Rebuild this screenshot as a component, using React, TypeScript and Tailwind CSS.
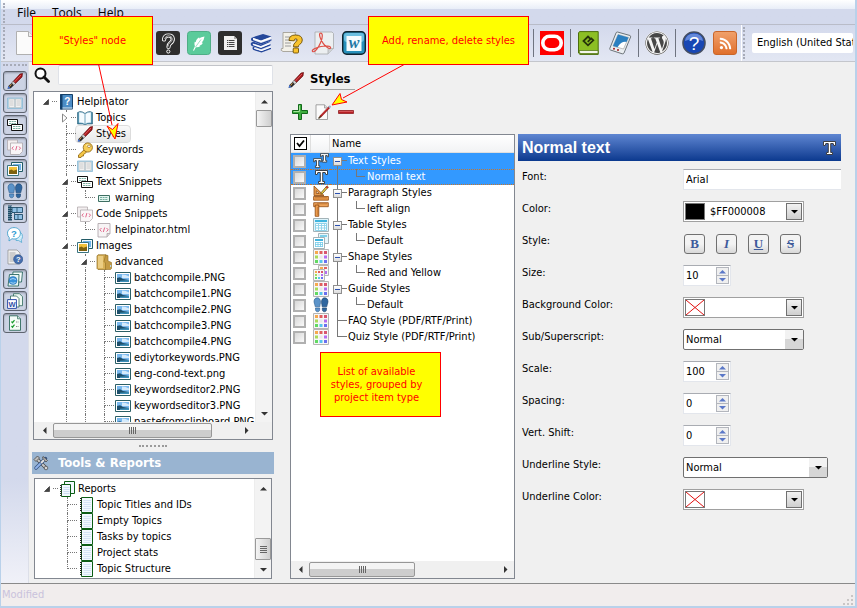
import type { ReactNode } from 'react';
import { FaRss, FaWordpress } from 'react-icons/fa';

/* ---------- icons ---------- */

function Svg({ size = 16, children }: { size?: number; children: ReactNode }) {
  return (
    <svg width={size} height={size} viewBox="0 0 16 16" className="block shrink-0" aria-hidden="true">
      {children}
    </svg>
  );
}

function Brush() {
  return (
    <Svg>
      <path d="M15.6 .4 13 1 6 8.6l2.2 2.2L15 4z" fill="#a3181a" stroke="#5a0a0b" strokeWidth=".6" />
      <path d="M14 2 7.4 9" stroke="#e0575a" strokeWidth="1" />
      <path d="M6.2 8.4 4.6 10l2.2 2.2 1.6-1.6z" fill="#d6d6d6" stroke="#555" strokeWidth=".5" />
      <path d="M4.6 10 1.4 13 .6 15.8l3.2-.6 3-3z" fill="#2b2b2b" />
      <path d="M1.6 13 .5 15.8l2.8-.6z" fill="#3f74e0" />
      <path d="M4.4 11.2 2.6 13.6" stroke="#d89a4a" strokeWidth="1" />
    </Svg>
  );
}

function HelpBook() {
  return (
    <Svg>
      <path d="M2.500 .5h12v14.500h-12z" fill="#4b8cc6" stroke="#143f68" />
      <path d="M2 .5h2.500v15H2z" fill="#14416d" />
      <path d="M4.500 14h10" stroke="#dbe9f5" />
      <text x="9.3" y="11" fontSize="10" fontWeight="700" fill="#fff" textAnchor="middle" fontFamily="Liberation Sans">?</text>
    </Svg>
  );
}

function OpenBook() {
  return (
    <Svg>
      <path d="M.5 2.500 3 1.500q3 0 5 2 2-2 5-2l2.500 1V14H10L8 15l-2-1H.5z" fill="#3b82a0" stroke="#2c5f79" strokeWidth=".6" />
      <path d="M2 2.300q4-.3 6 2V14q-2-1.500-6-1.300zM14 2.300q-4-.3-6 2V14q2-1.500 6-1.300z" fill="#f4fbff" stroke="#9fc4d8" strokeWidth=".5" />
      <path d="M8 4.300V14" stroke="#7da9bf" strokeWidth=".7" />
    </Svg>
  );
}

function Key() {
  return (
    <Svg>
      <path d="M8 7 1.500 13v2.500H4L5 14h1.500v-1.500l1-.5 2.500-2.500z" fill="#f3c544" stroke="#8a5f0c" strokeWidth=".8" />
      <circle cx="10.800" cy="5.500" r="4.600" fill="#f7cd55" stroke="#8a5f0c" strokeWidth=".8" />
      <path d="M9 3.500q2-1.800 4 .3" stroke="#fff2b8" strokeWidth="1" fill="none" />
      <ellipse cx="12" cy="4.300" rx="1.500" ry="1.200" fill="#fff" stroke="#8a5f0c" strokeWidth=".6" />
    </Svg>
  );
}

function Glossary() {
  return (
    <Svg>
      <path d="M.5 3h15v10.500H.5z" fill="#b4daee" stroke="#8cb9d3" strokeWidth=".8" />
      <path d="M2 4h5.600v8.500H2zM8.400 4H14v8.500H8.400z" fill="#f1f1f1" stroke="#b5b5b5" strokeWidth=".5" />
      <path d="M3 6h3.500M3 8h3.500M3 10h3.500M9.500 6H13M9.500 8H13M9.500 10H13" stroke="#c4c4c4" strokeWidth=".8" />
    </Svg>
  );
}

function TextSnippets() {
  return (
    <Svg>
      <path d="M.5 2.500h10v6H.5z" fill="#fff" stroke="#111" />
      <path d="M2 4.500h7M2 6.500h7" stroke="#5a9c8a" strokeDasharray="2 .6" strokeWidth=".8" />
      <path d="M4.500 7.500h11v6h-11z" fill="#fff" stroke="#111" />
      <path d="M6 9.500h8M6 11.500h8" stroke="#5a9c8a" strokeDasharray="2 .6" strokeWidth=".8" />
    </Svg>
  );
}

function Snippet() {
  return (
    <Svg>
      <path d="M2.500 5.500h11v6h-11z" fill="#e4f6f0" stroke="#3d6f62" />
      <path d="M4 7.500h8M4 9.500h8" stroke="#5a9c8a" strokeDasharray="2 .6" strokeWidth=".8" />
    </Svg>
  );
}

function CodeSheet() {
  return (
    <Svg>
      <path d="M2 1.500h12v10l-3 3.500H2z" fill="#f7f4f5" stroke="#a8a0a4" strokeWidth=".8" />
      <path d="M14 11.500h-3V15" fill="#d9d2d5" stroke="#a8a0a4" strokeWidth=".7" />
      <path d="M5.500 6 3.800 7.800l1.700 1.800M8.700 5.500 7.300 10M10.500 6l1.700 1.800-1.700 1.800" stroke="#e2688c" strokeWidth="1" fill="none" />
    </Svg>
  );
}

function CodeSnippets() {
  return (
    <Svg>
      <path d="M.5 1h10v10H.5z" fill="#f3eff0" stroke="#aaa2a5" strokeWidth=".7" />
      <path d="M3.500 4h12v8.500L12.500 15.500h-9z" fill="#f9f6f7" stroke="#a8a0a4" strokeWidth=".7" />
      <path d="M6.500 7.500 5 9.200l1.500 1.700M9.900 7 8.700 11.300M12 7.500l1.500 1.700-1.500 1.700" stroke="#e2688c" fill="none" />
    </Svg>
  );
}

function Images() {
  return (
    <Svg>
      <path d="M4.500 1.500h11v9h-11z" fill="#eef7fb" stroke="#225a66" />
      <path d="M6 3h8v6H6z" fill="#6fb3ea" />
      <path d="M.5 4.500h11v10H.5z" fill="#fff" stroke="#3a7480" />
      <path d="M2 6h8v5H2z" fill="#f2c13a" />
      <path d="M2 9.500l2.500-1 2 1.200 3.500-1.200V13H2z" fill="#7d6110" />
    </Svg>
  );
}

function Folder() {
  return (
    <Svg>
      <path d="M1 2 2 .8h8L11 2v12.500L10 15.500H2L1 14.500z" fill="#d7b057" stroke="#8f6d22" strokeWidth=".7" />
      <path d="M2 2h5v12H2z" fill="#ebcd83" />
      <path d="M8 7.500 9.500 9v6.500H14.500l1-1V8.500L12 7V1.500L9.500 1z" fill="#c39a44" stroke="#8f6d22" strokeWidth=".6" />
      <path d="M14.600 11v2" stroke="#b7ddf5" />
    </Svg>
  );
}

function Picture() {
  return (
    <Svg>
      <path d="M.5 2.500h15v11H.5z" fill="#fff" stroke="#2b5f66" />
      <path d="M2 4h12v8H2z" fill="#79b8ee" />
      <path d="M7 4.500q4 0 7 2V8H7z" fill="#d4eafb" />
      <path d="M2 8l3-.8 3 1.800 6 1V12H2z" fill="#1d4f6b" />
      <path d="M5 10.800 14 10V12H5z" fill="#3d8fb8" />
    </Svg>
  );
}

function Notebook() {
  return (
    <Svg>
      <path d="M3.500 .5h11v15h-11z" fill="#f2f8ff" stroke="#0b5d14" />
      <path d="M5.500 3.500h7.500M5.500 5.500h7.500M5.500 7.500h7.500M5.500 9.500h7.500M5.500 11.500h7.500M5.500 13.500h7.500" stroke="#cddff2" strokeWidth=".8" />
      <path d="M3 1v14" stroke="#222" strokeWidth="2" strokeDasharray="1 1" />
    </Svg>
  );
}

function Reports() {
  return (
    <Svg>
      <path d="M5.500 .5h10v12h-10z" fill="#f2f8ff" stroke="#0b5d14" />
      <path d="M2.500 3.500h9v12h-9z" fill="#f2f8ff" stroke="#0b5d14" />
      <path d="M2 4v11" stroke="#333" strokeWidth="2" strokeDasharray="1 1" />
      <path d="M4.500 6.500h6M4.500 8.500h6M4.500 10.500h6M4.500 12.500h6" stroke="#cddff2" />
    </Svg>
  );
}

function Steps() {
  return (
    <Svg>
      <path d="M4.300.8c2.200 0 3.300 2 3.200 4.500 0 2-.7 2.700-.7 4.500H2.300C2.200 8 1 6.800 1 4.800 1 2.400 2.200.8 4.300.8z" fill="#5b93c9" stroke="#2a5a8d" strokeWidth=".6" />
      <path d="M2.500 11h4.200v1.500c0 3-4.200 3-4.200 0z" fill="#5b93c9" stroke="#2a5a8d" strokeWidth=".6" />
      <path d="M11.700.8c-2.200 0-3.300 2-3.200 4.500 0 2 .7 2.700.7 4.500h4.500c.1-1.800 1.300-3 1.300-5 0-2.400-1.200-4-3.300-4z" fill="#2f669f" stroke="#153f6b" strokeWidth=".6" />
      <path d="M9.300 11h4.200v1.500c0 3-4.200 3-4.200 0z" fill="#2f669f" stroke="#153f6b" strokeWidth=".6" />
    </Svg>
  );
}

function Film() {
  return (
    <Svg>
      <path d="M1 .5h4v15H1z" fill="#1e4b66" />
      <path d="M2 1v14M4.300 1v14" stroke="#cfe4ef" strokeWidth=".8" strokeDasharray="1 1" />
      <path d="M5 2.500h10.500v5H5zM7.500 9.500h8v5h-8z" fill="#8fc0e4" stroke="#1e4b66" strokeWidth=".9" />
      <path d="M10 2v5.500M11 9.500v5M7.500 7.500v2" stroke="#1e4b66" strokeWidth=".8" />
    </Svg>
  );
}

function Chat() {
  return (
    <Svg>
      <path d="M9 4.500q6.500 0 6.500 5 0 2-1.300 3l.5 3-3-2H9z" fill="#d3effc" stroke="#56a9d0" strokeWidth=".8" />
      <path d="M7 .6c3.800 0 6.400 2.300 6.400 5.600S10.800 12 7 12q-1 0-2-.3L2 14l.3-3.300Q.5 9 .5 6.200C.5 3 3.200.6 7 .6z" fill="#fff" stroke="#45a0cc" strokeWidth=".9" />
      <text x="7" y="9.800" fontSize="9.500" fontWeight="700" fill="#2f9cd2" textAnchor="middle" fontFamily="Liberation Sans">?</text>
    </Svg>
  );
}

function DocHelp() {
  return (
    <Svg>
      <path d="M1 1h9l3 3v11H1z" fill="#f1f1f1" stroke="#8b8b8b" strokeWidth=".7" />
      <path d="M2.500 4h6M2.500 6h7M2.500 8h5M2.500 10h4M2.500 12h4" stroke="#999" strokeWidth=".8" />
      <circle cx="11.200" cy="10.300" r="4.600" fill="#466fae" stroke="#2c4e85" strokeWidth=".6" />
      <text x="11.200" y="13" fontSize="7.500" fontWeight="700" fill="#fff" textAnchor="middle" fontFamily="Liberation Sans">?</text>
    </Svg>
  );
}

function WebPages() {
  return (
    <Svg>
      <path d="M6 1h9.500l-1 10H5z" fill="#f4fbfa" stroke="#2d6a63" strokeWidth=".9" />
      <path d="M2.500 3.500h9.500l-.5 11.500H1z" fill="#e9f6f4" stroke="#2d6a63" strokeWidth=".9" />
      <circle cx="6" cy="9.500" r="4" fill="#3a93dc" stroke="#1d62a3" strokeWidth=".5" />
      <path d="M3 8.500q3-2 6 0M3.500 11.500q3 1.500 5 0" stroke="#c7e5fa" fill="none" strokeWidth=".8" />
    </Svg>
  );
}

function WordDocs() {
  return (
    <Svg>
      <path d="M6.500.7h6l3 3v9h-9z" fill="#eef8f2" stroke="#2f6a5c" strokeWidth=".8" />
      <path d="M3.500 3h6l2.500 2.500V14h-8.500z" fill="#fff" stroke="#2f6a5c" strokeWidth=".8" />
      <path d="M.6 6.600h8.800v8.800H.6z" fill="#fff" stroke="#2f4fa8" />
      <text x="5" y="13.700" fontSize="7.500" fontWeight="700" fill="#2f4fa8" textAnchor="middle" fontFamily="Liberation Sans">W</text>
    </Svg>
  );
}

function CheckSheet() {
  return (
    <Svg>
      <path d="M2.500.8h8l3 3v11.500h-11z" fill="#f6fdf8" stroke="#2f6a5c" strokeWidth=".9" />
      <path d="M10.500.8v3h3" fill="#cfe5da" stroke="#2f6a5c" strokeWidth=".7" />
      <path d="M4.500 6.500l1 1.200 2-2.500M4.500 11l1 1.200 2-2.500" stroke="#159a2b" strokeWidth="1.200" fill="none" />
      <path d="M9 7h2.500M9 11.500h2.500" stroke="#888" strokeDasharray="1 .6" />
    </Svg>
  );
}

function LetterT() {
  return (
    <Svg>
      <path d="M2.500 1.500h12v4h-1.700l-.6-2H9.700v9h1.800v2h-6v-2h1.800v-9H4.800l-.6 2H2.500z" fill="#fff" stroke="#333" strokeWidth=".9" />
    </Svg>
  );
}

function DoubleT() {
  return (
    <Svg>
      <path d="M7.500.6h8v3.200h-1.300V2.500h-1.600v5h1.100v1.600H9.300V7.500h1.100v-5H8.800v1.300H7.500z" fill="#fff" stroke="#333" strokeWidth=".8" />
      <path d="M.6 5.600h8v3.200H7.300V7.500H5.700v5.400h1.100v1.700H2.400v-1.700h1.100V7.500H1.900v1.300H.6z" fill="#fff" stroke="#333" strokeWidth=".8" />
    </Svg>
  );
}

function RulerPencil() {
  return (
    <Svg>
      <path d="M1 1v9.500h10zM3.300 5.800l3 2.700h-3z" fill="#e79a4b" stroke="#8f4a10" strokeWidth=".8" fillRule="evenodd" />
      <path d="M.6 11.500h14.800v3.700H.6z" fill="#ec9c4e" stroke="#8f4a10" strokeWidth=".8" />
      <path d="M3 12v1.500M5 12v1.500M7 12v1.500M9 12v1.500M11 12v1.500M13 12v1.500" stroke="#8f4a10" strokeWidth=".6" />
      <path d="M14 .8 15.400 2 9.500 8.600 7.800 9.300l.4-1.800z" fill="#f6d64a" stroke="#4b3b0a" strokeWidth=".7" />
      <path d="M13.200 1.500 14.800 3" stroke="#c22" strokeWidth="1.600" />
    </Svg>
  );
}

function RulerCorner() {
  return (
    <Svg>
      <path d="M.7 1.700h14.600v4H.7z" fill="#f0a55b" stroke="#8f4a10" strokeWidth=".8" />
      <path d="M2.200 4h3.600v11.300H2.200z" fill="#ec9c4e" stroke="#8f4a10" strokeWidth=".8" />
      <path d="M5 2v1.500M7 2v1.500M9 2v1.500M11 2v1.500M13 2v1.500M4 7h1.500M4 9h1.500M4 11h1.500M4 13h1.500" stroke="#8f4a10" strokeWidth=".6" />
    </Svg>
  );
}

function TableIcon() {
  return (
    <Svg>
      <path d="M.5 1.500h15v13H.5z" fill="#dff4fb" stroke="#a3b3b8" />
      <path d="M2 3h12v2H2z" fill="#3fb4de" />
      <path d="M2.500 6.500h11v7h-11z" fill="#fff" stroke="#8dd3ea" />
      <path d="M5.500 6v7M8.500 6v7M11.500 6v7M2 8.500h12M2 11h12" stroke="#8dd3ea" strokeWidth=".9" />
    </Svg>
  );
}

function TablesIcon() {
  return (
    <Svg>
      <path d="M5.500.5h10v10h-10z" fill="#e6f6fb" stroke="#a3b3b8" />
      <path d="M7 2h7v2H7z" fill="#7fd0ea" />
      <path d="M.5 4.500h11v11H.5z" fill="#fff" stroke="#a3b3b8" />
      <path d="M2 6h8v2H2z" fill="#3fb4de" />
      <path d="M2.500 9v5M5 9v5M7.500 9v5M9.500 9v5M2 9.500h8M2 11.500h8M2 13.500h8" stroke="#74cbe8" strokeWidth=".8" />
    </Svg>
  );
}

const SWATCHES = ['#f5a94f', '#e0605f', '#d9566f', '#a8dc5a', '#e9e9e9', '#b46cf0', '#62da62', '#58c6ee', '#6a70f0'];

function ShapeGrid() {
  return (
    <Svg>
      <path d="M.5.5h15v15H.5z" fill="#f7f7f7" stroke="#b5b5b5" />
      {SWATCHES.map((fill, i) => (
        <rect key={fill} x={2 + (i % 3) * 4.500} y={2 + Math.floor(i / 3) * 4.500} width="3" height="3" fill={fill} />
      ))}
    </Svg>
  );
}

function ShapeGrids() {
  return (
    <Svg>
      <path d="M5.500.5h10v10h-10z" fill="#f7f7f7" stroke="#b5b5b5" />
      <path d="M7 2h3v2H7z" fill="#f5a94f" />
      <path d="M11 2h3v2h-3z" fill="#e0605f" />
      <path d="M12 6h2v3h-2z" fill="#b46cf0" />
      <path d="M.5 4.500h11v11H.5z" fill="#f7f7f7" stroke="#b5b5b5" />
      {SWATCHES.map((fill, i) => (
        <rect key={fill} x={2 + (i % 3) * 3} y={6 + Math.floor(i / 3) * 3} width="2" height="2" fill={fill} />
      ))}
    </Svg>
  );
}

function Wrenches() {
  return (
    <Svg>
      <path d="M3 3l10 10" stroke="#474747" strokeWidth="3.400" />
      <path d="M3 3l10 10" stroke="#c9c9c9" strokeWidth="1.900" />
      <path d="M12.500 3.500 3 13" stroke="#35507d" strokeWidth="3.400" strokeLinecap="round" />
      <path d="M7 9 3 13" stroke="#8fb2ea" strokeWidth="2" strokeLinecap="round" />
      <path d="M12.500 3.500 8 8" stroke="#e2e2e2" strokeWidth="1.900" />
      <path d="M1 4.500 4.500 1 6.500 3 3 6.500zM10 1.500l4.500 4-1.500 1.500L9.500 3z" fill="#bdbdbd" stroke="#474747" strokeWidth=".8" />
      <circle cx="13" cy="13" r="1.800" fill="#d5d5d5" stroke="#474747" strokeWidth=".7" />
    </Svg>
  );
}

function PlusIcon() {
  return (
    <Svg>
      <path d="M6.500.5h3v6h6v3h-6v6h-3v-6h-6v-3h6z" fill="#3fae3f" stroke="#12691a" strokeWidth="1" />
      <path d="M7.500 1.500v6h-6" stroke="#a3e49a" fill="none" />
    </Svg>
  );
}

function EditIcon() {
  return (
    <Svg>
      <path d="M1 .8h8.500L12.500 4v11.500H1z" fill="#fbfbfb" stroke="#8d8d8d" strokeWidth=".8" />
      <path d="M9.500.8V4h3" fill="#ddd" stroke="#8d8d8d" strokeWidth=".7" />
      <path d="M14.500 3 5 13" stroke="#a3181a" strokeWidth="2" />
      <path d="M13.500 3.500 6 11.500" stroke="#e35a5a" strokeWidth=".7" />
      <path d="M5.800 12.200 3.500 14.500" stroke="#4a3a22" strokeWidth="1.300" />
      <path d="M15.500 2 14 3.500" stroke="#9db4d6" strokeWidth="2" />
    </Svg>
  );
}

function MinusIcon() {
  return (
    <Svg>
      <path d="M.5 6.500h15v3H.5z" fill="#b81f24" stroke="#8a1013" strokeWidth=".7" />
      <path d="M1 7.500h14" stroke="#e06a6e" strokeWidth=".7" />
    </Svg>
  );
}

function Magnifier() {
  return (
    <Svg>
      <circle cx="6.500" cy="6.500" r="5" fill="#fff" stroke="#111" strokeWidth="2" />
      <path d="M10 10l4.500 4.500" stroke="#111" strokeWidth="2.800" strokeLinecap="round" />
    </Svg>
  );
}

/* 24px toolbar drawings */

function Big({ children }: { children: ReactNode }) {
  return (
    <svg width="24" height="24" viewBox="0 0 24 24" className="block shrink-0" aria-hidden="true">
      {children}
    </svg>
  );
}

function NewPage() {
  return (
    <Big>
      <path d="M.5.5h12l5 5v18H.5z" fill="#fbfbfb" stroke="#b0b0b0" />
      <path d="M12.500 .5v5h5" fill="#eee" stroke="#b0b0b0" />
    </Big>
  );
}

function ChmTile() {
  return (
    <Big>
      <rect width="24" height="24" rx="3" fill="#2e2e2e" />
      <path d="M8 8.500q.5-4 4.500-4t4.300 3.500q0 2.500-2.500 4.200-1.800 1.300-1.800 3.800" fill="none" stroke="#fff" strokeWidth="4.200" strokeLinecap="round" />
      <path d="M8 8.500q.5-4 4.500-4t4.300 3.500q0 2.500-2.500 4.200-1.800 1.300-1.800 3.800" fill="none" stroke="#2e2e2e" strokeWidth="2.400" strokeLinecap="round" />
      <path d="M8.500 8q1-3.300 4-3.300 3.800.2 3.800 3.300 0 2-2.300 3.700-2 1.500-2 4" fill="none" stroke="#ddd" strokeWidth=".7" />
      <circle cx="12.300" cy="20.500" r="1.600" fill="#2e2e2e" stroke="#fff" strokeWidth="1" />
    </Big>
  );
}

function FeatherTile() {
  return (
    <Big>
      <rect x=".5" y=".5" width="23" height="23" rx="3" fill="#5bcb9b" stroke="#4fae86" />
      <path d="M17.500 5.500q-3.500.3-5.500 2l.3-1.300Q9 8 8.700 11.300l-1-.6q-.7 2.500.2 4.500L6 19.500l1 .3 1.800-3.600q2.700.3 4.700-1.200l-1.200-.3q2.500-.7 3.700-3l-1.300.1q2.300-2.300 2.800-6.300z" fill="#fff" />
      <path d="M8.500 16 14 8.500" stroke="#5bcb9b" strokeWidth=".6" />
    </Big>
  );
}

function DocTile() {
  return (
    <Big>
      <rect width="24" height="24" rx="3" fill="#2e2e2e" />
      <path d="M6 5h10l3 3v11H6z" fill="#f1f1f1" />
      <path d="M16 5v3h3" fill="#aaa" />
      <path d="M9 9.500h7.500M9 11.500h7.500M9 13.500h7.500M9 15.500h7.500" stroke="#444" />
      <path d="M10.500 9v7" stroke="#f1f1f1" strokeWidth=".6" />
    </Big>
  );
}

function Books() {
  return (
    <Big>
      <path d="M3 6.500 14 3l8.500 2.500L12 9.500z" fill="#24479a" />
      <path d="M3 6.500Q1 8 3 10l9 3.500 10.500-4V8.200L12 12 4 9V7z" fill="#24479a" />
      <path d="M4 8.300 12 11.300l10-3.800V6L12 9.700 4 7z" fill="#fff" />
      <path d="M3 11.300 2.500 11.500Q.8 13.200 2.800 15l9.200 3.200 9.500-3.700v-1.400L12 16.700 3.800 14v-1.600l8 2.600 9.700-4.300-.8-.5-9 3.200-7-2.600z" fill="#24479a" />
      <path d="M4 13 12 15.600l9-3.600v1L12 16.700 4 14z" fill="#fff" />
      <path d="M4.500 15.500Q2.500 17 4.500 19l8 2.500 9.500-3.600v-1.400L12.500 20l-7-2.200v-1.300z" fill="#24479a" />
      <path d="M5 16.900l7.500 2.200 9.500-3.500v1L12.500 20 5 17.700z" fill="#fff" />
    </Big>
  );
}

function DocQuestion() {
  return (
    <Big>
      <path d="M3 1.500h13q-2 1 0 3v16H3q-3-1-1.500-3H3z" fill="#f3f1e9" stroke="#9b978a" strokeWidth=".8" />
      <path d="M5 6h8M5 9h7M5 12h6M5 15h6" stroke="#9a9a9a" />
      <path d="M9 9.500q0-5.500 6.500-5.500t6.800 5q0 3-2.700 4.500-1.200.7-1.200 2.300h-5q0-3 2-4.500 1.700-1.200 1.700-2.200 0-1.300-1.300-1.300-1.600 0-1.600 2z" fill="#f8c22c" stroke="#6e4f06" strokeWidth=".9" />
      <rect x="13.200" y="17" width="5.300" height="5" rx="1" fill="#f8c22c" stroke="#6e4f06" strokeWidth=".9" />
    </Big>
  );
}

function PdfIcon() {
  return (
    <Big>
      <path d="M4 1h17l1.500 1.500v15L17 23H4z" fill="#eceff1" stroke="#a6a9ac" strokeWidth=".8" />
      <path d="M22.500 17.500H17V23" fill="#cfd3d6" stroke="#a6a9ac" strokeWidth=".7" />
      <path d="M9.200 2.300c2.800-1 2.700 4.200.3 9.500C7.500 16.500 4 22 1.500 20.500.2 19 5 16.500 10 15.500c5-.9 9.700-.7 9.600 1.200-.2 2.300-5-.5-7.600-4.500C9.500 8.500 7.500 3 9.200 2.300z" fill="none" stroke="#de4f46" strokeWidth="1.200" />
    </Big>
  );
}

function WordTile() {
  return (
    <Big>
      <rect x=".7" y=".7" width="22.600" height="22.600" rx="4" fill="#2790bb" stroke="#10242e" strokeWidth="1.400" />
      <rect x="2" y="2" width="20" height="9" rx="3" fill="#6cbfe0" />
      <rect x="4.500" y="5" width="15" height="15" fill="#f5fbfd" />
      <text x="12" y="17" fontSize="16" fontStyle="italic" fontWeight="700" fill="#2379a4" textAnchor="middle" fontFamily="Liberation Serif">w</text>
    </Big>
  );
}

function RedO() {
  return (
    <Big>
      <path d="M0 0h24v24H0z" fill="#f00" />
      <rect x="2.800" y="5.300" width="18.400" height="13.400" rx="6.700" fill="none" stroke="#fff" strokeWidth="3.600" />
    </Big>
  );
}

function Epub() {
  return (
    <Big>
      <path d="M2.500.6h18.700v22.800H3L1.500 22V2z" fill="#8cbf24" stroke="#4c6e0d" strokeWidth="1" />
      <path d="M2 19.500h19v3H3z" fill="#f3f5ea" stroke="#4c6e0d" strokeWidth=".7" />
      <path d="M13 7.500 11 5.500 6.500 10l4.500 4.300 5.300-5-2-1.900-3.600 3.400" fill="none" stroke="#26340a" strokeWidth="1.800" />
    </Big>
  );
}

function Ereader() {
  return (
    <Big>
      <path d="M9.500 1 22 4.500q1 .5.600 1.500L16 22q-.6 1.200-1.800.8L2.500 19q-1.200-.5-.7-1.600L8 2q.5-1.200 1.500-1z" fill="#e9edf0" stroke="#6d7479" strokeWidth="1" />
      <path d="M10 3.500 20.500 6.500 15.500 18 5 15z" fill="#fff" stroke="#888" strokeWidth=".5" />
      <path d="M10 3.500 20.500 6.500 18.500 11q-5-1-9 5.200L5 15z" fill="#2b7fc0" />
      <circle cx="6" cy="17.800" r="1" fill="#a32020" />
      <circle cx="10" cy="19" r="1" fill="#a32020" />
    </Big>
  );
}

function WordPressIcon() {
  return (
    <span className="flex size-6 items-center justify-center rounded-full bg-[#f4f4f4] text-[#464646]">
      <FaWordpress size={24} />
    </span>
  );
}

function HelpRound() {
  return (
    <Big>
      <circle cx="12" cy="12" r="11" fill="#1746b4" stroke="#454f63" strokeWidth="1.600" />
      <path d="M3 10q1-7.500 9-7.500t9 7.500q-9-4-18 0z" fill="#6488da" />
      <text x="12" y="18.500" fontSize="19" fill="#fff" textAnchor="middle" fontFamily="Liberation Sans">?</text>
    </Big>
  );
}

function RssTile() {
  return (
    <span className="flex size-6 items-center justify-center rounded-[3px] border border-[#c9662a] bg-linear-to-b from-[#f0a06a] to-[#e0702c] text-white">
      <FaRss size={13} />
    </span>
  );
}

/* ---------- small parts ---------- */

function ToolButton({ label, children }: { label: string; children: ReactNode }) {
  return (
    <button type="button" aria-label={label} className="block size-6 shrink-0">
      {children}
    </button>
  );
}

function Sep() {
  return <span className="mx-[6px] h-7 w-px shrink-0 bg-[#6f7480]" />;
}

function Grip({ tall }: { tall?: boolean }) {
  return <span className={`w-0 shrink-0 border-l-2 border-dotted border-[#a7abb8] ${tall ? 'h-8' : 'h-5'}`} />;
}

const ARROWS = {
  up: 'M0 4.500 3.500 1 7 4.500z',
  down: 'M0 1 3.500 4.500 7 1z',
  left: 'M5.500 0 2 3.500 5.500 7z',
  right: 'M2 0 5.500 3.500 2 7z',
};

function Arrow({ dir, color = '#333' }: { dir: keyof typeof ARROWS; color?: string }) {
  const tall = dir === 'left' || dir === 'right';
  return (
    <svg width="7" height={tall ? 7 : 5} className="block shrink-0" aria-hidden="true">
      <path d={ARROWS[dir]} fill={color} />
    </svg>
  );
}

function VScroll({ atEnd }: { atEnd?: boolean }) {
  return (
    <div className="flex w-[17px] shrink-0 flex-col border-l border-[#ededed] bg-[#f3f3f3]">
      <button type="button" aria-label="Scroll up" className="flex h-[18px] items-center justify-center"><Arrow dir="up" /></button>
      {atEnd && <span className="flex-1" />}
      <div className={`flex flex-col items-center justify-center gap-px rounded-[1px] border border-[#999] bg-linear-to-r from-[#f4f4f4] to-[#cfcfcf] ${atEnd ? 'h-[22px]' : 'h-[17px]'}`}>
        {atEnd && [0, 1, 2, 3].map((i) => <span key={i} className="h-px w-[7px] bg-[#666]" />)}
      </div>
      {!atEnd && <span className="flex-1" />}
      <button type="button" aria-label="Scroll down" className="flex h-[18px] items-center justify-center"><Arrow dir="down" /></button>
    </div>
  );
}

function HScroll({ thumb }: { thumb: string }) {
  return (
    <div className="flex h-[17px] shrink-0 bg-[#f0f0f0]">
      <button type="button" aria-label="Scroll left" className="flex w-[18px] items-center justify-center"><Arrow dir="left" /></button>
      <div className={`my-px flex items-center justify-center gap-px rounded-[2px] border border-[#979797] bg-linear-to-b from-[#f4f4f4] from-50% to-[#cdcdcd] to-50% ${thumb}`}>
        {[0, 1, 2, 3].map((i) => <span key={i} className="h-[7px] w-px bg-[#666]" />)}
      </div>
      <span className="flex-1" />
      <button type="button" aria-label="Scroll right" className="flex w-[18px] items-center justify-center"><Arrow dir="right" /></button>
    </div>
  );
}

function Callout({ className, children }: { className: string; children: ReactNode }) {
  return (
    <div className={`absolute flex items-center justify-center border border-[#f00] bg-[#ff0] text-center leading-[13px] text-[#f00] ${className}`}>
      {children}
    </div>
  );
}

/* ---------- tree ---------- */

// Guide codes, one per indent level: " " blank, "|" through line, "t" tee,
// "l" last child, "o" opened tee, "c" collapsed tee, "r" opened root.
type Node = { guides: string; icon: () => ReactNode; text: string; selected?: boolean };

function Guide({ code }: { code: string }) {
  const up = 'tlo|c'.includes(code);
  const down = 'to|c'.includes(code);
  const across = 'tlocr'.includes(code);
  const dot = 'border-dotted border-[#777]';
  return (
    <span className="relative grid h-4 w-[19px] shrink-0 grid-cols-[9px_1fr] grid-rows-2">
      <span />
      <span className={`${dot} ${up ? 'border-l' : ''} ${across ? 'border-b' : ''}`} />
      <span />
      <span className={`${dot} ${down ? 'border-l' : ''}`} />
      {'ocr'.includes(code) && (
        <span className="absolute inset-y-0 left-0 flex w-4 items-center justify-center">
          <svg width="10" height="10" className="block bg-white" aria-hidden="true">
            {code === 'c'
              ? <path d="M2.500 1v8l4.500-4z" fill="#fff" stroke="#8a8a8a" />
              : <path d="M7.500 2.500v5h-5z" fill="#444" stroke="#222" strokeWidth=".6" />}
          </svg>
        </span>
      )}
    </span>
  );
}

function Tree({ nodes, label }: { nodes: Node[]; label: string }) {
  return (
    <ul aria-label={label} className="min-h-0 min-w-0 flex-1 overflow-hidden pt-[2px] pl-1">
      {nodes.map(({ guides, icon: Icon, text, selected }) => (
        <li key={text} className="flex h-4 items-center whitespace-nowrap">
          {guides.split('').map((code, i) => <Guide key={i} code={code} />)}
          <span className={`flex h-4 items-center gap-[3px] pr-1 pl-px ${selected ? 'rounded-[3px] bg-linear-to-b from-[#fafafa] to-[#e8e8e8] outline outline-[#dcdcdc]' : ''}`}>
            <Icon />
            {text}
          </span>
        </li>
      ))}
    </ul>
  );
}

const PROJECT: Node[] = [
  { guides: 'r', icon: HelpBook, text: 'Helpinator' },
  { guides: ' c', icon: OpenBook, text: 'Topics' },
  { guides: ' t', icon: Brush, text: 'Styles', selected: true },
  { guides: ' t', icon: Key, text: 'Keywords' },
  { guides: ' t', icon: Glossary, text: 'Glossary' },
  { guides: ' o', icon: TextSnippets, text: 'Text Snippets' },
  { guides: ' |l', icon: Snippet, text: 'warning' },
  { guides: ' o', icon: CodeSnippets, text: 'Code Snippets' },
  { guides: ' |l', icon: CodeSheet, text: 'helpinator.html' },
  { guides: ' o', icon: Images, text: 'Images' },
  { guides: ' |o', icon: Folder, text: 'advanced' },
  ...['batchcompile.PNG', 'batchcompile1.PNG', 'batchcompile2.PNG', 'batchcompile3.PNG', 'batchcompile4.PNG', 'ediytorkeywords.PNG', 'eng-cond-text.png', 'keywordseditor2.PNG', 'keywordseditor3.PNG', 'pastefromclipboard.PNG'].map(
    (text) => ({ guides: ' ||t', icon: Picture, text }),
  ),
];

const REPORTS: Node[] = [
  { guides: 'r', icon: Reports, text: 'Reports' },
  { guides: ' t', icon: Notebook, text: 'Topic Titles and IDs' },
  { guides: ' t', icon: Notebook, text: 'Empty Topics' },
  { guides: ' t', icon: Notebook, text: 'Tasks by topics' },
  { guides: ' t', icon: Notebook, text: 'Project stats' },
  { guides: ' l', icon: Notebook, text: 'Topic Structure' },
];

/* ---------- styles list ---------- */

type StyleRow = { icon: () => ReactNode; text: string; kind: 'group' | 'child' | 'leaf'; first?: boolean; last?: boolean; selected?: boolean; focused?: boolean };

const STYLES: StyleRow[] = [
  { icon: DoubleT, text: 'Text Styles', kind: 'group', first: true, selected: true },
  { icon: LetterT, text: 'Normal text', kind: 'child', selected: true, focused: true },
  { icon: RulerPencil, text: 'Paragraph Styles', kind: 'group' },
  { icon: RulerCorner, text: 'left align', kind: 'child' },
  { icon: TableIcon, text: 'Table Styles', kind: 'group' },
  { icon: TablesIcon, text: 'Default', kind: 'child' },
  { icon: ShapeGrid, text: 'Shape Styles', kind: 'group' },
  { icon: ShapeGrids, text: 'Red and Yellow', kind: 'child' },
  { icon: ShapeGrid, text: 'Guide Styles', kind: 'group' },
  { icon: Steps, text: 'Default', kind: 'child' },
  { icon: ShapeGrid, text: 'FAQ Style (PDF/RTF/Print)', kind: 'leaf' },
  { icon: ShapeGrid, text: 'Quiz Style (PDF/RTF/Print)', kind: 'leaf', last: true },
];

function Branch({ row }: { row: StyleRow }) {
  const line = 'border-[#777]';
  return (
    <>
      <span className="relative grid h-4 w-[18px] shrink-0 grid-cols-[7px_1fr] grid-rows-2">
        <span />
        <span className={`${line} ${row.first ? '' : 'border-l'} ${row.kind === 'child' ? '' : 'mr-px border-b'}`} />
        <span />
        <span className={`${line} ${row.last ? '' : 'border-l'}`} />
        {row.kind === 'group' && (
          <span className="absolute inset-y-0 left-[3px] flex items-center">
            <span className="flex size-[9px] items-center justify-center border border-[#8f8f8f] bg-linear-to-b from-white to-[#dcdcdc]">
              <span className="h-px w-[5px] bg-[#2b50b0]" />
            </span>
          </span>
        )}
      </span>
      {row.kind === 'child' && (
        <span className="grid h-4 w-[19px] shrink-0 grid-cols-[8px_9px] grid-rows-2">
          <span />
          <span className={`${line} border-b border-l`} />
        </span>
      )}
    </>
  );
}

function StylesTable() {
  return (
    <table className="w-full table-fixed border-separate border-spacing-0">
      <colgroup>
        <col className="w-5" />
        <col className="w-[19px]" />
        <col />
      </colgroup>
      <thead>
        <tr className="h-[18px] bg-linear-to-b from-white to-[#f1f2f4] text-left">
          <th className="border-r border-b border-[#dfdfdf] p-0 pl-[3px] font-normal">
            <span className="relative block size-[13px]">
              <input type="checkbox" defaultChecked aria-label="Select all styles" className="block size-[13px] appearance-none border border-black bg-white" />
              <svg width="13" height="13" className="pointer-events-none absolute inset-0" aria-hidden="true">
                <path d="M3 6l2.500 3L10 3.500" fill="none" stroke="#000" strokeWidth="1.800" />
              </svg>
            </span>
          </th>
          <th className="border-r border-b border-[#dfdfdf] p-0" aria-label="Icon" />
          <th className="border-b border-[#dfdfdf] p-0 pl-[2px] font-normal">Name</th>
        </tr>
      </thead>
      <tbody>
        {STYLES.map((row, i) => {
          const Icon = row.icon;
          const edge = row.focused ? 'border-y border-dotted border-[#c8752a]' : '';
          return (
            <tr key={i} className={`h-4 ${row.selected ? 'bg-[#39f] text-white' : ''}`}>
              <td className={`h-4 p-0 pl-[2px] ${edge}`}>
                <input type="checkbox" aria-label={`Select ${row.text}`} className="block size-[13px] appearance-none border-2 border-[#b0b0b0] bg-linear-to-br from-[#d8d8d8] to-[#fafafa]" />
              </td>
              <td className={`h-4 p-0 pl-[2px] ${edge}`}><div className="-my-px"><Icon /></div></td>
              <td className={`h-4 p-0 ${edge}`}>
                <span className="-my-px flex h-4 items-center whitespace-nowrap">
                  <Branch row={row} />
                  {row.text}
                </span>
              </td>
            </tr>
          );
        })}
      </tbody>
    </table>
  );
}

/* ---------- property form ---------- */

function Field({ label, id, children }: { label: string; id: string; children: ReactNode }) {
  return (
    <div className="flex h-8 items-start">
      <label htmlFor={id} className="w-[165px] shrink-0 pt-1 pl-1 leading-4">{label}</label>
      <div className="flex min-w-0 flex-1 pt-1">{children}</div>
    </div>
  );
}

function Spin({ id, value }: { id: string; value: string }) {
  return (
    <div className="flex h-[21px] w-12 items-center border border-[#e3e6ec] border-t-[#a9acb2] bg-white">
      <input id={id} defaultValue={value} className="w-8 min-w-0 pl-[2px] outline-none" />
      <span className="flex w-[13px] flex-col gap-px border border-[#b3b6bd] bg-[#b3b6bd]">
        <button type="button" aria-label="Increase" className="flex h-[7px] items-center justify-center bg-[#f0f0f0]"><Arrow dir="up" color="#5b78c8" /></button>
        <button type="button" aria-label="Decrease" className="flex h-[7px] items-center justify-center bg-[#f0f0f0]"><Arrow dir="down" color="#5b78c8" /></button>
      </span>
    </div>
  );
}

function ColorSelect({ id, value }: { id: string; value?: string }) {
  return (
    <div className="relative h-[21px] w-[121px] border border-[#a0a0a0] bg-white">
      <select id={id} className="block h-full w-full appearance-none pl-[26px] outline-none">
        <option>{value ?? ''}</option>
      </select>
      <span className={`pointer-events-none absolute inset-y-px left-px w-5 border border-[#777] ${value ? 'bg-black' : 'bg-white'}`}>
        {!value && (
          <svg viewBox="0 0 18 15" preserveAspectRatio="none" className="block size-full" aria-hidden="true">
            <path d="M0 0l18 15M18 0L0 15" stroke="#e01010" />
          </svg>
        )}
      </span>
      <span className="pointer-events-none absolute inset-y-px right-px flex w-4 items-center justify-center border border-[#707070] bg-linear-to-b from-[#f2f2f2] to-[#cfcfcf]">
        <Arrow dir="down" color="#000" />
      </span>
    </div>
  );
}

function PlainSelect({ id, width }: { id: string; width: string }) {
  return (
    <div className={`relative h-[21px] rounded-[2px] border border-[#707070] bg-white ${width}`}>
      <select id={id} className="block h-full w-full appearance-none pl-[2px] outline-none">
        <option>Normal</option>
      </select>
      <span className="pointer-events-none absolute inset-y-0 right-0 flex w-[18px] items-center justify-center bg-linear-to-b from-[#f2f2f2] from-50% to-[#d6d6d6] to-50%">
        <Arrow dir="down" color="#000" />
      </span>
    </div>
  );
}

const FORMAT = [
  { mark: 'B', name: 'Bold', look: '' },
  { mark: 'I', name: 'Italic', look: 'italic' },
  { mark: 'U', name: 'Underline', look: 'underline' },
  { mark: 'S', name: 'Strikethrough', look: 'line-through' },
];

/* ---------- page ---------- */

const RAIL: { icon: () => ReactNode; label: string; flat?: boolean }[] = [
  { icon: Brush, label: 'Styles' },
  { icon: Glossary, label: 'Glossary' },
  { icon: TextSnippets, label: 'Text snippets' },
  { icon: CodeSnippets, label: 'Code snippets' },
  { icon: Images, label: 'Images' },
  { icon: Steps, label: 'Guides' },
  { icon: Film, label: 'Video' },
  { icon: Chat, label: 'FAQ', flat: true },
  { icon: DocHelp, label: 'Quizzes', flat: true },
  { icon: WebPages, label: 'Web templates' },
  { icon: WordDocs, label: 'Word templates' },
  { icon: CheckSheet, label: 'Checklists' },
];

export default function App() {
  return (
    <div className="relative flex h-screen min-h-[600px] flex-col overflow-hidden border-r-2 border-b-2 border-l border-[#b9d1ea] bg-[#f0f0f0] font-['DejaVu_Sans_Condensed','DejaVu_Sans',sans-serif] text-[11px] leading-4 text-black">
      <nav className="flex h-6 shrink-0 items-center gap-4 bg-linear-to-b from-white from-0% via-[#e9eef8] via-37% to-[#d3d9ec] to-38% pt-px pl-[2px] font-['Open_Sans',sans-serif] text-xs">
        <span className="-mr-1 flex"><Grip /></span>
        <button type="button">File</button>
        <button type="button">Tools</button>
        <button type="button">Help</button>
      </nav>

      <div className="flex h-[38px] shrink-0 items-center border-y border-t-[#b9bcc8] border-b-[#c4c6cc] bg-linear-to-b from-[#d3d9ec] to-[#e3e7f3] pr-[2px] pl-[2px]">
        <Grip tall />
        <span className="ml-[11px]"><ToolButton label="New"><NewPage /></ToolButton></span>
        <span className="ml-[116px] flex gap-[7px]">
          <ToolButton label="Compile CHM"><ChmTile /></ToolButton>
          <ToolButton label="Web help"><FeatherTile /></ToolButton>
          <ToolButton label="HTML page"><DocTile /></ToolButton>
          <ToolButton label="Library"><Books /></ToolButton>
          <ToolButton label="Help file"><DocQuestion /></ToolButton>
          <ToolButton label="PDF"><PdfIcon /></ToolButton>
          <ToolButton label="Word"><WordTile /></ToolButton>
        </span>
        <span className="ml-[161px] flex items-center">
          <Sep />
          <ToolButton label="Oracle help"><RedO /></ToolButton>
          <Sep />
          <span className="flex gap-[7px]">
            <ToolButton label="ePub"><Epub /></ToolButton>
            <ToolButton label="Kindle"><Ereader /></ToolButton>
          </span>
          <Sep />
          <ToolButton label="WordPress"><WordPressIcon /></ToolButton>
          <Sep />
          <span className="flex gap-[7px]">
            <ToolButton label="Help"><HelpRound /></ToolButton>
            <ToolButton label="News"><RssTile /></ToolButton>
          </span>
        </span>
        <span className="ml-1 flex h-full min-w-0 flex-1 items-center gap-[7px] border-l border-white pl-px">
          <Grip tall />
          <select aria-label="Language" className="h-5 min-w-0 flex-1 appearance-none rounded-[2px] bg-white pl-[5px] outline-none">
            <option>English (United States)</option>
          </select>
        </span>
      </div>

      <div className="flex min-h-0 flex-1">
        <aside className="flex w-7 shrink-0 flex-col items-center border-r border-[#dcdfe8] bg-linear-to-b from-[#d3d9ec] from-80% to-[#f0f1f8]">
          <span className="mt-[2px] mb-[5px] w-6 border-t-2 border-dotted border-[#a7abb8]" />
          <div className="flex flex-col gap-[2px]">
            {RAIL.map(({ icon: Icon, label, flat }) => (
              <button
                key={label}
                type="button"
                aria-label={label}
                className={`flex h-5 w-6 items-center justify-center rounded-[3px] ${flat ? '' : 'border border-[#5f6570] bg-[#ccd3e4] inset-shadow-[0_1px_2px_#8d93a3]'}`}
              >
                <Icon />
              </button>
            ))}
          </div>
        </aside>

        <section className="ml-1 flex w-60 shrink-0 flex-col pt-[3px] pb-1">
          <div className="flex h-5 items-center gap-2 pl-px">
            <Magnifier />
            <input aria-label="Search" className="h-5 min-w-0 flex-1 rounded-[2px] border border-[#dfe2e8] border-t-[#c2c4c9] bg-white px-1 outline-none" />
          </div>
          <div className="mt-[6px] flex min-h-0 flex-1 flex-col border border-[#828790] bg-white">
            <div className="flex min-h-0 flex-1">
              <Tree nodes={PROJECT} label="Project" />
              <VScroll />
            </div>
            <div className="flex bg-[#f0f0f0] pr-[17px] pl-px">
              <div className="flex-1"><HScroll thumb="w-[159px]" /></div>
            </div>
          </div>
          <div className="flex h-3 shrink-0 items-center justify-center"><span className="w-7 border-t-2 border-dotted border-[#9a9a9a]" /></div>
          <h2 className="-mx-px flex h-[22px] shrink-0 items-center gap-[9px] bg-[#99b4d1] pl-px text-[13px] font-bold text-white">
            <Wrenches />
            Tools &amp; Reports
          </h2>
          <div className="mx-px mt-1 flex h-[101px] shrink-0 border border-[#828790] bg-white">
            <Tree nodes={REPORTS} label="Reports" />
            <VScroll atEnd />
          </div>
        </section>

        <section className="ml-4 flex w-[226px] shrink-0 flex-col pb-1 pl-px">
          <header className="flex shrink-0 items-center gap-[6px] pt-[7px]">
            <span className="-ml-[2px]"><Brush /></span>
            <h1 className="h-[21px] border-b border-[#a3a3a3] pr-1 text-[13px] leading-5 font-bold">Styles</h1>
          </header>
          <div className="flex h-11 shrink-0 items-center gap-[7px] pl-[2px]">
            <button type="button" aria-label="Add style"><PlusIcon /></button>
            <button type="button" aria-label="Rename style"><EditIcon /></button>
            <button type="button" aria-label="Delete style"><MinusIcon /></button>
          </div>
          <div className="relative flex min-h-0 flex-1 flex-col border border-[#828790] bg-white">
            <div className="min-h-0 flex-1 overflow-hidden"><StylesTable /></div>
            <HScroll thumb="w-[106px]" />
            <Callout className="top-[217px] left-[29px] h-[65px] w-[121px] pr-3 pl-1">List of available styles, grouped by project item type</Callout>
          </div>
        </section>

        <section className="mr-[14px] ml-[3px] min-w-0 flex-1 pt-[72px]">
          <h2 className="mb-1 flex h-[27px] items-center justify-between bg-linear-to-b from-[#5f86d2] to-[#0a398e] pr-1 pl-1 font-['Liberation_Sans',sans-serif] text-base font-bold text-white">
            Normal text
            <LetterT />
          </h2>
          <form>
            <Field label="Font:" id="font">
              <input id="font" defaultValue="Arial" className="h-[21px] min-w-0 flex-1 border-y border-l border-[#e3e6ec] border-t-[#a9acb2] bg-white pl-[2px] outline-none" />
            </Field>
            <Field label="Color:" id="color"><ColorSelect id="color" value="$FF000008" /></Field>
            <Field label="Style:" id="bold">
              <div className="flex gap-[11px] pt-px pl-px">
                {FORMAT.map(({ mark, name, look }) => (
                  <button
                    key={mark}
                    id={name.toLowerCase()}
                    type="button"
                    aria-label={name}
                    className={`flex h-5 w-[21px] items-center justify-center rounded-[3px] border border-[#707070] bg-linear-to-b from-[#f3f3f3] from-50% to-[#d8d8d8] font-['Liberation_Serif',serif] text-[13px] font-bold text-[#3e5b9b] ${look}`}
                  >
                    {mark}
                  </button>
                ))}
              </div>
            </Field>
            <Field label="Size:" id="size"><Spin id="size" value="10" /></Field>
            <Field label="Background Color:" id="background"><ColorSelect id="background" /></Field>
            <Field label="Sub/Superscript:" id="script"><PlainSelect id="script" width="w-[121px]" /></Field>
            <Field label="Scale:" id="scale"><Spin id="scale" value="100" /></Field>
            <Field label="Spacing:" id="spacing"><Spin id="spacing" value="0" /></Field>
            <Field label="Vert. Shift:" id="shift"><Spin id="shift" value="0" /></Field>
            <Field label="Underline Style:" id="underline-style"><PlainSelect id="underline-style" width="w-[145px]" /></Field>
            <Field label="Underline Color:" id="underline-color"><ColorSelect id="underline-color" /></Field>
          </form>
        </section>
      </div>

      <footer className="flex h-[23px] shrink-0 items-center border-t border-[#8a8a8a] bg-[#f1eded] pl-px text-[#c9c2dc]">
        <span className="flex-1">Modified</span>
        <svg width="12" height="12" className="mr-px self-end" aria-hidden="true">
          <path d="M9 1h2v2H9zM9 5h2v2H9zM9 9h2v2H9zM5 5h2v2H5zM5 9h2v2H5zM1 9h2v2H1z" fill="#c9c5c5" />
        </svg>
      </footer>

      <Callout className="top-4 left-[31px] h-[49px] w-[121px]">&quot;Styles&quot; node</Callout>
      <Callout className="top-4 left-[367px] h-[49px] w-[161px]">Add, rename, delete styles</Callout>
      <svg width="24" height="78" className="pointer-events-none absolute top-[64px] left-[96px]" aria-hidden="true">
        <path d="M1.500 0 15 61" stroke="#f00" fill="none" />
        <path d="M18 75 10 62l5.500 3.500L21 59.500z" fill="#ff0" stroke="#f00" />
      </svg>
      <svg width="80" height="44" className="pointer-events-none absolute top-[64px] left-[328px]" aria-hidden="true">
        <path d="M76 0 14 34" stroke="#f00" fill="none" />
        <path d="M3 41 11 29.500l1.500 6 5.500 2.500z" fill="#ff0" stroke="#f00" />
      </svg>
    </div>
  );
}
